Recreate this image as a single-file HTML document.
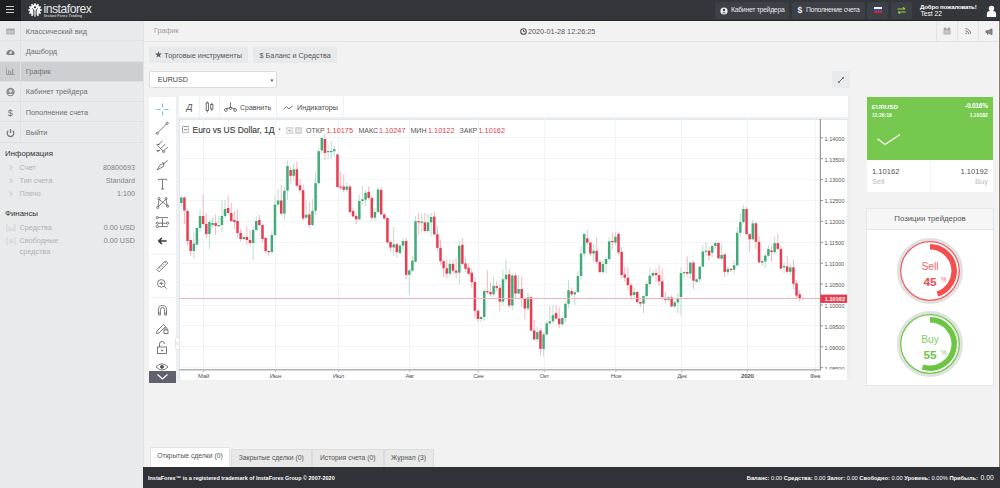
<!DOCTYPE html>
<html><head><meta charset="utf-8">
<style>
*{box-sizing:border-box;margin:0;padding:0}
html,body{width:1000px;height:488px;overflow:hidden;background:#f2f2f2;font-family:"Liberation Sans",sans-serif;}
.a{position:absolute}
.t{position:absolute;white-space:nowrap;line-height:1}
#hdr{left:0;top:0;width:1000px;height:21px;background:#33363b;border-bottom:1.2px solid #25282c}
#burger{left:0;top:0;width:20.8px;height:21px;background:#1d1f22;border-bottom:1.2px solid #141517}
#side{left:0;top:21px;width:144px;height:467px;background:#e9eaeb;border-right:1px solid #e2e3e4}
.mi{position:absolute;left:0;width:143px;height:20.25px;border-bottom:1px solid #dfe0e2}
.mi .ic{position:absolute;left:0;top:0;width:21px;height:19.25px;border-right:1px solid #dfe0e2}
.mi .tx{position:absolute;left:25.8px;top:6.5px;font-size:7.32px;color:#6c7075;line-height:1;white-space:nowrap}
#crumb{left:144px;top:21px;width:854px;height:21px;border-bottom:1px solid #e4e4e4}
#foot{left:143px;top:467px;width:857px;height:21px;background:#303237}
.btn{position:absolute;background:#e8e9eb}
#chart{left:148.5px;top:96.4px;width:701.5px;height:285px;background:#edf0f3}
#ltb{left:149px;top:96.5px;width:27px;height:274.6px;background:#fff}
#ttb{left:179px;top:96.4px;width:668.6px;height:20.4px;background:#fff}
#plot{left:179.2px;top:119.2px;width:667.8px;height:260.6px;background:#fff;border-left:0.8px solid #e2e6e9;border-top:0.8px solid #e2e6e9}
#grn{left:867px;top:97px;width:126px;height:63px;background:#77c84f}
#sb{left:867px;top:160px;width:126px;height:32px;background:#fff}
#pos{left:866px;top:208px;width:128px;height:178px;background:#fff;border:1px solid #e6e6e6}
.tab{position:absolute;top:449px;height:18px;background:#e8e8e8;border:1px solid #dcdcdc;border-bottom:none;font-size:6.8px;color:#555}
.tab span{position:absolute;top:4.6px;left:0;right:0;text-align:center;line-height:1;white-space:nowrap}
.hb{position:absolute;top:2px;height:17px;background:#3d4046;border-radius:2px}
.ticon{position:absolute;left:155px;width:15px;height:15px}
</style></head><body>
<div class="a" id="hdr"></div>
<div class="a" id="burger"></div>
<!-- burger lines -->
<div class="a" style="left:6.2px;top:6px;width:7.8px;height:1.4px;background:#ccc"></div>
<div class="a" style="left:6.2px;top:8.9px;width:7.8px;height:1.4px;background:#ccc"></div>
<div class="a" style="left:6.2px;top:11.7px;width:7.8px;height:1.4px;background:#ccc"></div>
<!-- logo -->
<svg class="a" style="left:28.2px;top:3.2px" width="14" height="14" viewBox="0 0 14 14">
<path fill="#f4f4f4" d="M5.93 1.81 L6.26 0.34 L7.74 0.34 L8.07 1.81 L8.66 1.97 L9.69 0.87 L10.97 1.60 L10.53 3.04 L10.96 3.47 L12.40 3.03 L13.13 4.31 L12.03 5.34 L12.19 5.93 L13.66 6.26 L13.66 7.74 L12.19 8.07 L12.03 8.66 L13.13 9.69 L12.40 10.97 L10.96 10.53 L10.53 10.96 L10.97 12.40 L9.69 13.13 L8.66 12.03 L8.07 12.19 L7.74 13.66 L6.26 13.66 L5.93 12.19 L5.34 12.03 L4.31 13.13 L3.03 12.40 L3.47 10.96 L3.04 10.53 L1.60 10.97 L0.87 9.69 L1.97 8.66 L1.81 8.07 L0.34 7.74 L0.34 6.26 L1.81 5.93 L1.97 5.34 L0.87 4.31 L1.60 3.03 L3.04 3.47 L3.47 3.04 L3.03 1.60 L4.31 0.87 L5.34 1.97 Z"/>
<circle cx="7" cy="4.2" r="1.05" fill="#2a2c30"/>
<path d="M4.4 5.6 Q5.9 6.4 5.9 8 V13.8 M9.6 5.6 Q8.1 6.4 8.1 8 V13.8" fill="none" stroke="#2a2c30" stroke-width="0.95"/>
</svg>
<div class="t" style="left:43.5px;top:3.2px;font-size:12.2px;letter-spacing:-0.5px;color:#e6e6e6">instaforex</div>
<div class="t" style="left:44px;top:14.5px;font-size:3.75px;color:#c4c4c4;font-weight:bold">Instant Forex Trading</div>
<!-- header buttons -->
<div class="hb" style="left:715px;width:74px"></div>
<svg class="a" style="left:719.5px;top:7px" width="8" height="8" viewBox="0 0 8 8"><circle cx="4" cy="4" r="3.6" fill="#eee"/><circle cx="4" cy="3" r="1.2" fill="#3d4046"/><path d="M2 6.3 Q4 4 6 6.3" fill="#3d4046"/></svg>
<div class="t" style="left:731px;top:7.3px;font-size:6.85px;letter-spacing:-0.28px;color:#e8e8e8">Кабинет трейдера</div>
<div class="hb" style="left:792px;width:73px"></div>
<div class="t" style="left:797.5px;top:6.2px;font-size:8.6px;color:#eee;font-weight:bold">$</div>
<div class="t" style="left:806px;top:7.3px;font-size:6.85px;letter-spacing:-0.3px;color:#e8e8e8">Пополнение счета</div>
<div class="hb" style="left:867px;width:21px"></div>
<div class="a" style="left:874px;top:7px;width:7.5px;height:2px;background:#f4f4f4"></div>
<div class="a" style="left:874px;top:9px;width:7.5px;height:2px;background:#2453b8"></div>
<div class="a" style="left:874px;top:11px;width:7.5px;height:2px;background:#e0202a"></div>
<div class="hb" style="left:891px;width:21px"></div>
<svg class="a" style="left:897px;top:7px" width="9" height="7" viewBox="0 0 9 7"><g stroke="#9bd53a" stroke-width="1.1" fill="none"><path d="M0.5 2 H8 M6 0.3 L8 2"/><path d="M8.5 5 H1 M3 6.7 L1 5"/></g></svg>
<div class="t" style="left:920px;top:4.3px;font-size:6.15px;letter-spacing:-0.2px;color:#fff;font-weight:bold">Добро пожаловать!</div>
<div class="t" style="left:920.5px;top:11.3px;font-size:6.67px;color:#fff">Test 22</div>
<svg class="a" style="left:986px;top:5px" width="11" height="13" viewBox="986 5 11 13"><circle cx="991.5" cy="8.5" r="2.7" fill="#fafafa"/><path d="M986.9 16.9 V14 Q986.9 10.9 990 10.9 H993 Q996.1 10.9 996.1 14 V16.9 Z" fill="#fafafa"/></svg>

<!-- sidebar -->
<div class="a" id="side"></div>
<div class="mi" style="top:21px"><div class="ic"></div><div class="tx">Классический вид</div></div>
<div class="mi" style="top:41.25px"><div class="ic"></div><div class="tx">Дашборд</div></div>
<div class="mi" style="top:61.5px;background:#cdd0d3"><div class="ic"></div><div class="tx">График</div></div>
<div class="mi" style="top:81.75px"><div class="ic"></div><div class="tx">Кабинет трейдера</div></div>
<div class="mi" style="top:102px"><div class="ic"></div><div class="tx">Пополнение счета</div></div>
<div class="mi" style="top:122.25px"><div class="ic"></div><div class="tx">Выйти</div></div>
<!-- sidebar icons -->
<svg class="a" style="left:0;top:21px" width="21" height="120">
<rect x="6.3" y="7.6" width="8.4" height="5.8" fill="#a3a6a9"/>
<rect x="7.1" y="9.3" width="6.8" height="3.3" fill="#c3c5c8"/>
<g transform="translate(10.5 31)"><path d="M-4.2 2 A4.2 4.2 0 1 1 4.2 2 L3 3 L-3 3 Z" fill="#7d8185"/><circle cx="0" cy="0.8" r="1.2" fill="#e9eaeb"/><path d="M0 0.8 L2.2 -2.2" stroke="#e9eaeb" stroke-width="0.8"/></g>
<g fill="#9a9ea2"><rect x="6" y="47" width="1" height="7"/><rect x="6" y="53" width="9" height="1"/><rect x="8" y="49" width="1.3" height="4"/><rect x="10" y="50" width="1.3" height="3"/><rect x="12" y="48" width="1.3" height="5"/></g>
<g transform="translate(10.5 71)"><circle r="4.2" fill="#8c9094"/><circle cx="0" cy="-1" r="1.5" fill="#e9eaeb"/><path d="M-2.6 3 Q0 0.3 2.6 3" fill="#e9eaeb"/></g>
<text x="10.3" y="94.5" font-size="9" fill="#6d7175" text-anchor="middle" font-family="Liberation Sans">$</text>
<g transform="translate(10.5 112)" fill="none" stroke="#777b7f" stroke-width="1.3"><path d="M-2.2 -2.2 A3.3 3.3 0 1 0 2.2 -2.2"/><path d="M0 -4 V0"/></g>
</svg>
<div class="t" style="left:5px;top:149.5px;font-size:7.84px;color:#333">Информация</div>
<div class="t" style="left:19.5px;top:163.7px;font-size:7.3px;color:#afb2b5">Счет</div>
<div class="t" style="left:19.5px;top:176.8px;font-size:7.3px;color:#afb2b5">Тип счета</div>
<div class="t" style="left:19.5px;top:189.5px;font-size:7.3px;color:#afb2b5">Плечо</div>
<div class="t" style="right:865px;top:163.7px;font-size:7.2px;color:#808387">80800693</div>
<div class="t" style="right:865px;top:176.8px;font-size:7.2px;color:#808387">Standard</div>
<div class="t" style="right:865px;top:189.5px;font-size:7.2px;color:#808387">1:100</div>
<svg class="a" style="left:0;top:160px" width="20" height="40" viewBox="0 160 20 40" fill="none" stroke="#cfd2d5" stroke-width="1.3"><path d="M9.6 165.6 L12.2 167.8 L9.6 170 M9.6 178.7 L12.2 180.9 L9.6 183.1 M9.6 191.5 L12.2 193.7 L9.6 195.9"/></svg>
<div class="t" style="left:5px;top:210px;font-size:7.86px;color:#333">Финансы</div>
<div class="t" style="left:19.5px;top:223.6px;font-size:7.3px;color:#afb2b5">Средства</div>
<div class="t" style="left:19.5px;top:236.7px;font-size:7.3px;color:#afb2b5">Свободные</div>
<div class="t" style="left:19.5px;top:247.8px;font-size:7.3px;color:#afb2b5">средства</div>
<div class="t" style="right:865px;top:223.6px;font-size:7.2px;color:#808387">0.00 USD</div>
<div class="t" style="right:865px;top:236.7px;font-size:7.2px;color:#808387">0.00 USD</div>
<svg class="a" style="left:5.5px;top:224px" width="10" height="21" viewBox="0 0 10 21" fill="none" stroke="#cdd0d3" stroke-width="0.8"><path d="M2 0.8 H0.8 V7.2 H2 M7.8 0.8 H9 V7.2 H7.8"/><path d="M3 3 V6 M5 4 V6 M7 2.5 V6 M2.5 6.2 H7.5"/><path d="M2 13.8 H0.8 V20.2 H2 M7.8 13.8 H9 V20.2 H7.8"/><path d="M3 15.8 H7 M3 17.2 H7 M3 18.6 H7"/></svg>

<!-- crumb bar -->
<div class="a" id="crumb"></div>
<div class="t" style="left:154px;top:27.3px;font-size:7.26px;color:#9a9a9a">График</div>
<svg class="a" style="left:519.5px;top:28px" width="7" height="7" viewBox="0 0 7 7"><circle cx="3.5" cy="3.5" r="2.8" fill="none" stroke="#555" stroke-width="1.1"/><path d="M3.5 1.8 V3.6 H5" fill="none" stroke="#555" stroke-width="0.9"/></svg>
<div class="t" style="left:528px;top:27.9px;font-size:7.26px;color:#555">2020-01-28 12:26:25</div>
<div class="a" style="left:936px;top:21px;width:1px;height:20px;background:#e2e2e2"></div>
<div class="a" style="left:957px;top:21px;width:1px;height:20px;background:#e2e2e2"></div>
<div class="a" style="left:978px;top:21px;width:1px;height:20px;background:#e2e2e2"></div>
<svg class="a" style="left:943px;top:27px" width="8" height="8" viewBox="0 0 8 8"><rect x="0.5" y="1.5" width="7" height="6" fill="#aaa"/><rect x="1.5" y="0.3" width="1" height="2" fill="#888"/><rect x="5.5" y="0.3" width="1" height="2" fill="#888"/><rect x="1.3" y="3.3" width="5.4" height="3.4" fill="#c8c8c8"/></svg>
<svg class="a" style="left:964.8px;top:28px" width="6.5" height="6.5" viewBox="0 0 8 8"><circle cx="1.3" cy="6.7" r="1" fill="#777"/><path d="M0.5 3.5 A4 4 0 0 1 4.5 7.5 M0.5 0.8 A6.7 6.7 0 0 1 7.2 7.5" fill="none" stroke="#777" stroke-width="1.2"/></svg>
<svg class="a" style="left:984.5px;top:28px" width="9" height="7.5" viewBox="0 0 10 8"><path d="M1 3 H3 L7.8 0.8 V7.2 L3 5 H1 Z" fill="#8a8a8a" stroke="#666" stroke-width="0.8" stroke-linejoin="round"/><path d="M2.6 5 L3.4 7.6" stroke="#666" stroke-width="1.1"/></svg>
<div class="a" style="left:998px;top:21px;width:1px;height:446px;background:#fafafa"></div><div class="a" style="left:999px;top:21px;width:1px;height:446px;background:#8c7a5c"></div>

<!-- buttons -->
<div class="btn" style="left:149.2px;top:46.9px;width:98.8px;height:16.3px"></div>
<svg class="a" style="left:155px;top:51.3px" width="7" height="7" viewBox="0 0 10 10"><path d="M5 0.3 L6.3 3.6 L9.8 3.7 L7 5.9 L8 9.4 L5 7.4 L2 9.4 L3 5.9 L0.2 3.7 L3.7 3.6 Z" fill="#575d63"/></svg>
<div class="t" style="left:164.3px;top:51.9px;font-size:7.26px;color:#555">Торговые инструменты</div>
<div class="btn" style="left:253.4px;top:46.9px;width:83.6px;height:16.3px"></div>
<div class="t" style="left:259.5px;top:51.9px;font-size:7.31px;color:#555">$ Баланс и Средства</div>
<div class="a" style="left:149.3px;top:71.2px;width:127.3px;height:17.3px;background:#fff;border:1px solid #dcdcdc;border-radius:2px"></div>
<div class="t" style="left:157.8px;top:77.3px;font-size:7.15px;color:#444">EURUSD</div>
<div class="t" style="left:269.8px;top:79px;font-size:4.3px;color:#333">▼</div>
<div class="a" style="left:831.5px;top:71px;width:18.5px;height:16.7px;background:#e9eaec"></div>
<svg class="a" style="left:836.6px;top:75.6px" width="8" height="8" viewBox="0 0 10 10"><path d="M2.5 7.5 L7.5 2.5" stroke="#5a5a5a" stroke-width="1.2"/><path d="M1.3 8.7 L1.7 6.2 L3.8 8.3 Z M8.7 1.3 L8.3 3.8 L6.2 1.7 Z" fill="#5a5a5a"/></svg>

<!-- chart container -->
<div class="a" id="chart"></div>
<div class="a" id="ltb"></div>
<div class="a" id="ttb"></div>
<div class="a" id="plot"></div>
<svg class="a" style="left:0;top:0" width="1000" height="488" shape-rendering="crispEdges">
<line x1="179" y1="137.8" x2="820.5" y2="137.8" stroke="#f2f5f8" stroke-width="1"/>
<line x1="179" y1="158.7" x2="820.5" y2="158.7" stroke="#f2f5f8" stroke-width="1"/>
<line x1="179" y1="179.6" x2="820.5" y2="179.6" stroke="#f2f5f8" stroke-width="1"/>
<line x1="179" y1="200.5" x2="820.5" y2="200.5" stroke="#f2f5f8" stroke-width="1"/>
<line x1="179" y1="221.4" x2="820.5" y2="221.4" stroke="#f2f5f8" stroke-width="1"/>
<line x1="179" y1="242.3" x2="820.5" y2="242.3" stroke="#f2f5f8" stroke-width="1"/>
<line x1="179" y1="263.2" x2="820.5" y2="263.2" stroke="#f2f5f8" stroke-width="1"/>
<line x1="179" y1="284.1" x2="820.5" y2="284.1" stroke="#f2f5f8" stroke-width="1"/>
<line x1="179" y1="305.0" x2="820.5" y2="305.0" stroke="#f2f5f8" stroke-width="1"/>
<line x1="179" y1="325.9" x2="820.5" y2="325.9" stroke="#f2f5f8" stroke-width="1"/>
<line x1="179" y1="346.8" x2="820.5" y2="346.8" stroke="#f2f5f8" stroke-width="1"/>
<line x1="179" y1="367.7" x2="820.5" y2="367.7" stroke="#f2f5f8" stroke-width="1"/>
<line x1="203.6" y1="119" x2="203.6" y2="370" stroke="#f0f3f7" stroke-width="1"/>
<line x1="275.4" y1="119" x2="275.4" y2="370" stroke="#f0f3f7" stroke-width="1"/>
<line x1="338.4" y1="119" x2="338.4" y2="370" stroke="#f0f3f7" stroke-width="1"/>
<line x1="409.7" y1="119" x2="409.7" y2="370" stroke="#f0f3f7" stroke-width="1"/>
<line x1="478.3" y1="119" x2="478.3" y2="370" stroke="#f0f3f7" stroke-width="1"/>
<line x1="544.3" y1="119" x2="544.3" y2="370" stroke="#f0f3f7" stroke-width="1"/>
<line x1="615.9" y1="119" x2="615.9" y2="370" stroke="#f0f3f7" stroke-width="1"/>
<line x1="681.9" y1="119" x2="681.9" y2="370" stroke="#f0f3f7" stroke-width="1"/>
<line x1="747.3" y1="119" x2="747.3" y2="370" stroke="#f0f3f7" stroke-width="1"/>
<line x1="815.8" y1="119" x2="815.8" y2="370" stroke="#f0f3f7" stroke-width="1"/>
</svg>
<svg class="a" style="left:0;top:0" width="1000" height="488"><defs><clipPath id="cb"><rect x="800" y="100" width="60" height="269.5"/></clipPath></defs>
<line x1="181.30" y1="195.7" x2="181.30" y2="206.3" stroke="#a9d8c0" stroke-width="0.8"/>
<line x1="184.42" y1="196.1" x2="184.42" y2="224.3" stroke="#f4a5b0" stroke-width="0.8"/>
<line x1="187.55" y1="208.9" x2="187.55" y2="245.7" stroke="#f4a5b0" stroke-width="0.8"/>
<line x1="190.67" y1="239.0" x2="190.67" y2="255.5" stroke="#f4a5b0" stroke-width="0.8"/>
<line x1="193.79" y1="232.5" x2="193.79" y2="258.8" stroke="#a9d8c0" stroke-width="0.8"/>
<line x1="196.92" y1="227.0" x2="196.92" y2="245.6" stroke="#a9d8c0" stroke-width="0.8"/>
<line x1="200.04" y1="209.6" x2="200.04" y2="231.7" stroke="#a9d8c0" stroke-width="0.8"/>
<line x1="203.16" y1="194.5" x2="203.16" y2="225.2" stroke="#f4a5b0" stroke-width="0.8"/>
<line x1="206.28" y1="213.2" x2="206.28" y2="238.6" stroke="#f4a5b0" stroke-width="0.8"/>
<line x1="209.41" y1="219.7" x2="209.41" y2="249.0" stroke="#a9d8c0" stroke-width="0.8"/>
<line x1="212.53" y1="217.8" x2="212.53" y2="227.6" stroke="#a9d8c0" stroke-width="0.8"/>
<line x1="215.65" y1="214.2" x2="215.65" y2="235.0" stroke="#f4a5b0" stroke-width="0.8"/>
<line x1="218.78" y1="216.0" x2="218.78" y2="227.1" stroke="#a9d8c0" stroke-width="0.8"/>
<line x1="221.90" y1="200.6" x2="221.90" y2="232.5" stroke="#a9d8c0" stroke-width="0.8"/>
<line x1="225.02" y1="199.8" x2="225.02" y2="218.4" stroke="#a9d8c0" stroke-width="0.8"/>
<line x1="228.15" y1="195.7" x2="228.15" y2="214.6" stroke="#f4a5b0" stroke-width="0.8"/>
<line x1="231.27" y1="203.0" x2="231.27" y2="222.0" stroke="#f4a5b0" stroke-width="0.8"/>
<line x1="234.39" y1="211.2" x2="234.39" y2="229.3" stroke="#f4a5b0" stroke-width="0.8"/>
<line x1="237.51" y1="209.6" x2="237.51" y2="237.5" stroke="#f4a5b0" stroke-width="0.8"/>
<line x1="240.64" y1="229.0" x2="240.64" y2="241.4" stroke="#f4a5b0" stroke-width="0.8"/>
<line x1="243.76" y1="235.2" x2="243.76" y2="240.4" stroke="#a9d8c0" stroke-width="0.8"/>
<line x1="246.88" y1="226.3" x2="246.88" y2="245.3" stroke="#f4a5b0" stroke-width="0.8"/>
<line x1="250.01" y1="230.0" x2="250.01" y2="245.3" stroke="#f4a5b0" stroke-width="0.8"/>
<line x1="253.13" y1="227.3" x2="253.13" y2="260.0" stroke="#a9d8c0" stroke-width="0.8"/>
<line x1="256.25" y1="216.5" x2="256.25" y2="231.3" stroke="#a9d8c0" stroke-width="0.8"/>
<line x1="259.38" y1="214.8" x2="259.38" y2="226.1" stroke="#f4a5b0" stroke-width="0.8"/>
<line x1="262.50" y1="223.3" x2="262.50" y2="242.3" stroke="#f4a5b0" stroke-width="0.8"/>
<line x1="265.62" y1="236.9" x2="265.62" y2="253.0" stroke="#f4a5b0" stroke-width="0.8"/>
<line x1="268.74" y1="250.0" x2="268.74" y2="256.3" stroke="#f4a5b0" stroke-width="0.8"/>
<line x1="271.87" y1="230.9" x2="271.87" y2="254.3" stroke="#a9d8c0" stroke-width="0.8"/>
<line x1="274.99" y1="195.7" x2="274.99" y2="236.4" stroke="#a9d8c0" stroke-width="0.8"/>
<line x1="278.11" y1="189.1" x2="278.11" y2="207.0" stroke="#a9d8c0" stroke-width="0.8"/>
<line x1="281.24" y1="185.0" x2="281.24" y2="215.4" stroke="#f4a5b0" stroke-width="0.8"/>
<line x1="284.36" y1="186.9" x2="284.36" y2="219.8" stroke="#a9d8c0" stroke-width="0.8"/>
<line x1="287.48" y1="160.3" x2="287.48" y2="199.8" stroke="#a9d8c0" stroke-width="0.8"/>
<line x1="290.61" y1="166.9" x2="290.61" y2="183.3" stroke="#f4a5b0" stroke-width="0.8"/>
<line x1="293.73" y1="163.6" x2="293.73" y2="180.7" stroke="#a9d8c0" stroke-width="0.8"/>
<line x1="296.85" y1="161.1" x2="296.85" y2="187.0" stroke="#f4a5b0" stroke-width="0.8"/>
<line x1="299.97" y1="179.2" x2="299.97" y2="193.0" stroke="#f4a5b0" stroke-width="0.8"/>
<line x1="303.10" y1="184.9" x2="303.10" y2="220.4" stroke="#f4a5b0" stroke-width="0.8"/>
<line x1="306.22" y1="200.5" x2="306.22" y2="218.8" stroke="#a9d8c0" stroke-width="0.8"/>
<line x1="309.34" y1="202.0" x2="309.34" y2="228.4" stroke="#f4a5b0" stroke-width="0.8"/>
<line x1="312.47" y1="199.0" x2="312.47" y2="226.2" stroke="#a9d8c0" stroke-width="0.8"/>
<line x1="315.59" y1="172.3" x2="315.59" y2="214.8" stroke="#a9d8c0" stroke-width="0.8"/>
<line x1="318.71" y1="148.0" x2="318.71" y2="185.0" stroke="#a9d8c0" stroke-width="0.8"/>
<line x1="321.84" y1="136.6" x2="321.84" y2="154.5" stroke="#a9d8c0" stroke-width="0.8"/>
<line x1="324.96" y1="133.3" x2="324.96" y2="160.3" stroke="#f4a5b0" stroke-width="0.8"/>
<line x1="328.08" y1="144.8" x2="328.08" y2="159.2" stroke="#a9d8c0" stroke-width="0.8"/>
<line x1="331.20" y1="141.5" x2="331.20" y2="158.7" stroke="#a9d8c0" stroke-width="0.8"/>
<line x1="334.33" y1="145.6" x2="334.33" y2="157.0" stroke="#a9d8c0" stroke-width="0.8"/>
<line x1="337.45" y1="153.4" x2="337.45" y2="188.2" stroke="#f4a5b0" stroke-width="0.8"/>
<line x1="340.57" y1="171.8" x2="340.57" y2="189.8" stroke="#f4a5b0" stroke-width="0.8"/>
<line x1="343.70" y1="174.3" x2="343.70" y2="192.3" stroke="#f4a5b0" stroke-width="0.8"/>
<line x1="346.82" y1="181.9" x2="346.82" y2="191.5" stroke="#a9d8c0" stroke-width="0.8"/>
<line x1="349.94" y1="185.1" x2="349.94" y2="214.3" stroke="#f4a5b0" stroke-width="0.8"/>
<line x1="353.07" y1="207.8" x2="353.07" y2="217.3" stroke="#f4a5b0" stroke-width="0.8"/>
<line x1="356.19" y1="213.9" x2="356.19" y2="224.2" stroke="#f4a5b0" stroke-width="0.8"/>
<line x1="359.31" y1="195.0" x2="359.31" y2="220.3" stroke="#a9d8c0" stroke-width="0.8"/>
<line x1="362.43" y1="185.7" x2="362.43" y2="205.3" stroke="#a9d8c0" stroke-width="0.8"/>
<line x1="365.56" y1="190.0" x2="365.56" y2="206.1" stroke="#a9d8c0" stroke-width="0.8"/>
<line x1="368.68" y1="186.5" x2="368.68" y2="199.6" stroke="#f4a5b0" stroke-width="0.8"/>
<line x1="371.80" y1="196.0" x2="371.80" y2="220.3" stroke="#f4a5b0" stroke-width="0.8"/>
<line x1="374.93" y1="207.8" x2="374.93" y2="220.9" stroke="#a9d8c0" stroke-width="0.8"/>
<line x1="378.05" y1="187.3" x2="378.05" y2="213.1" stroke="#a9d8c0" stroke-width="0.8"/>
<line x1="381.17" y1="187.3" x2="381.17" y2="215.4" stroke="#f4a5b0" stroke-width="0.8"/>
<line x1="384.30" y1="213.4" x2="384.30" y2="219.6" stroke="#f4a5b0" stroke-width="0.8"/>
<line x1="387.42" y1="217.0" x2="387.42" y2="243.8" stroke="#f4a5b0" stroke-width="0.8"/>
<line x1="390.54" y1="241.0" x2="390.54" y2="252.0" stroke="#f4a5b0" stroke-width="0.8"/>
<line x1="393.66" y1="227.1" x2="393.66" y2="256.0" stroke="#a9d8c0" stroke-width="0.8"/>
<line x1="396.79" y1="243.0" x2="396.79" y2="257.5" stroke="#f4a5b0" stroke-width="0.8"/>
<line x1="399.91" y1="244.1" x2="399.91" y2="254.1" stroke="#a9d8c0" stroke-width="0.8"/>
<line x1="403.03" y1="238.2" x2="403.03" y2="250.5" stroke="#a9d8c0" stroke-width="0.8"/>
<line x1="406.16" y1="237.9" x2="406.16" y2="279.7" stroke="#f4a5b0" stroke-width="0.8"/>
<line x1="409.28" y1="269.4" x2="409.28" y2="295.0" stroke="#a9d8c0" stroke-width="0.8"/>
<line x1="412.40" y1="255.9" x2="412.40" y2="272.0" stroke="#a9d8c0" stroke-width="0.8"/>
<line x1="415.53" y1="216.2" x2="415.53" y2="262.8" stroke="#a9d8c0" stroke-width="0.8"/>
<line x1="418.65" y1="213.0" x2="418.65" y2="234.6" stroke="#f4a5b0" stroke-width="0.8"/>
<line x1="421.77" y1="213.0" x2="421.77" y2="233.0" stroke="#a9d8c0" stroke-width="0.8"/>
<line x1="424.89" y1="213.0" x2="424.89" y2="231.6" stroke="#f4a5b0" stroke-width="0.8"/>
<line x1="428.02" y1="214.0" x2="428.02" y2="233.0" stroke="#a9d8c0" stroke-width="0.8"/>
<line x1="431.14" y1="213.0" x2="431.14" y2="236.2" stroke="#a9d8c0" stroke-width="0.8"/>
<line x1="434.26" y1="212.0" x2="434.26" y2="235.8" stroke="#f4a5b0" stroke-width="0.8"/>
<line x1="437.39" y1="225.6" x2="437.39" y2="251.2" stroke="#f4a5b0" stroke-width="0.8"/>
<line x1="440.51" y1="239.5" x2="440.51" y2="264.6" stroke="#f4a5b0" stroke-width="0.8"/>
<line x1="443.63" y1="259.8" x2="443.63" y2="277.2" stroke="#f4a5b0" stroke-width="0.8"/>
<line x1="446.76" y1="259.2" x2="446.76" y2="278.6" stroke="#f4a5b0" stroke-width="0.8"/>
<line x1="449.88" y1="260.0" x2="449.88" y2="277.2" stroke="#a9d8c0" stroke-width="0.8"/>
<line x1="453.00" y1="260.2" x2="453.00" y2="273.9" stroke="#f4a5b0" stroke-width="0.8"/>
<line x1="456.12" y1="258.0" x2="456.12" y2="278.5" stroke="#f4a5b0" stroke-width="0.8"/>
<line x1="459.25" y1="240.8" x2="459.25" y2="284.3" stroke="#a9d8c0" stroke-width="0.8"/>
<line x1="462.37" y1="238.0" x2="462.37" y2="265.2" stroke="#f4a5b0" stroke-width="0.8"/>
<line x1="465.49" y1="257.2" x2="465.49" y2="271.7" stroke="#f4a5b0" stroke-width="0.8"/>
<line x1="468.62" y1="263.1" x2="468.62" y2="275.5" stroke="#f4a5b0" stroke-width="0.8"/>
<line x1="471.74" y1="268.2" x2="471.74" y2="287.5" stroke="#f4a5b0" stroke-width="0.8"/>
<line x1="474.86" y1="277.4" x2="474.86" y2="318.7" stroke="#f4a5b0" stroke-width="0.8"/>
<line x1="477.99" y1="309.5" x2="477.99" y2="322.0" stroke="#f4a5b0" stroke-width="0.8"/>
<line x1="481.11" y1="315.8" x2="481.11" y2="322.0" stroke="#a9d8c0" stroke-width="0.8"/>
<line x1="484.23" y1="288.4" x2="484.23" y2="321.2" stroke="#a9d8c0" stroke-width="0.8"/>
<line x1="487.35" y1="270.3" x2="487.35" y2="294.1" stroke="#f4a5b0" stroke-width="0.8"/>
<line x1="490.48" y1="282.3" x2="490.48" y2="296.6" stroke="#f4a5b0" stroke-width="0.8"/>
<line x1="493.60" y1="277.4" x2="493.60" y2="297.0" stroke="#a9d8c0" stroke-width="0.8"/>
<line x1="496.72" y1="281.0" x2="496.72" y2="291.2" stroke="#f4a5b0" stroke-width="0.8"/>
<line x1="499.85" y1="284.5" x2="499.85" y2="311.3" stroke="#f4a5b0" stroke-width="0.8"/>
<line x1="502.97" y1="269.5" x2="502.97" y2="305.0" stroke="#a9d8c0" stroke-width="0.8"/>
<line x1="506.09" y1="259.7" x2="506.09" y2="282.9" stroke="#a9d8c0" stroke-width="0.8"/>
<line x1="509.22" y1="269.1" x2="509.22" y2="308.0" stroke="#f4a5b0" stroke-width="0.8"/>
<line x1="512.34" y1="273.9" x2="512.34" y2="310.0" stroke="#a9d8c0" stroke-width="0.8"/>
<line x1="515.46" y1="272.4" x2="515.46" y2="299.4" stroke="#f4a5b0" stroke-width="0.8"/>
<line x1="518.58" y1="274.8" x2="518.58" y2="294.6" stroke="#a9d8c0" stroke-width="0.8"/>
<line x1="521.71" y1="276.8" x2="521.71" y2="306.8" stroke="#f4a5b0" stroke-width="0.8"/>
<line x1="524.83" y1="297.3" x2="524.83" y2="319.1" stroke="#f4a5b0" stroke-width="0.8"/>
<line x1="527.95" y1="292.5" x2="527.95" y2="311.2" stroke="#a9d8c0" stroke-width="0.8"/>
<line x1="531.08" y1="295.8" x2="531.08" y2="331.0" stroke="#f4a5b0" stroke-width="0.8"/>
<line x1="534.20" y1="320.0" x2="534.20" y2="340.4" stroke="#f4a5b0" stroke-width="0.8"/>
<line x1="537.32" y1="327.0" x2="537.32" y2="342.0" stroke="#a9d8c0" stroke-width="0.8"/>
<line x1="540.45" y1="328.4" x2="540.45" y2="355.0" stroke="#f4a5b0" stroke-width="0.8"/>
<line x1="543.57" y1="332.6" x2="543.57" y2="356.0" stroke="#a9d8c0" stroke-width="0.8"/>
<line x1="546.69" y1="320.4" x2="546.69" y2="335.6" stroke="#a9d8c0" stroke-width="0.8"/>
<line x1="549.81" y1="306.0" x2="549.81" y2="324.7" stroke="#a9d8c0" stroke-width="0.8"/>
<line x1="552.94" y1="305.2" x2="552.94" y2="323.7" stroke="#a9d8c0" stroke-width="0.8"/>
<line x1="556.06" y1="305.2" x2="556.06" y2="320.2" stroke="#f4a5b0" stroke-width="0.8"/>
<line x1="559.18" y1="307.3" x2="559.18" y2="328.1" stroke="#f4a5b0" stroke-width="0.8"/>
<line x1="562.31" y1="316.5" x2="562.31" y2="325.3" stroke="#a9d8c0" stroke-width="0.8"/>
<line x1="565.43" y1="301.4" x2="565.43" y2="322.3" stroke="#a9d8c0" stroke-width="0.8"/>
<line x1="568.55" y1="280.0" x2="568.55" y2="308.2" stroke="#a9d8c0" stroke-width="0.8"/>
<line x1="571.67" y1="287.3" x2="571.67" y2="296.5" stroke="#f4a5b0" stroke-width="0.8"/>
<line x1="574.80" y1="290.2" x2="574.80" y2="305.0" stroke="#a9d8c0" stroke-width="0.8"/>
<line x1="577.92" y1="270.9" x2="577.92" y2="293.1" stroke="#a9d8c0" stroke-width="0.8"/>
<line x1="581.04" y1="246.3" x2="581.04" y2="279.6" stroke="#a9d8c0" stroke-width="0.8"/>
<line x1="584.17" y1="232.9" x2="584.17" y2="257.0" stroke="#a9d8c0" stroke-width="0.8"/>
<line x1="587.29" y1="230.2" x2="587.29" y2="244.8" stroke="#f4a5b0" stroke-width="0.8"/>
<line x1="590.41" y1="241.2" x2="590.41" y2="255.7" stroke="#f4a5b0" stroke-width="0.8"/>
<line x1="593.54" y1="244.3" x2="593.54" y2="261.4" stroke="#a9d8c0" stroke-width="0.8"/>
<line x1="596.66" y1="237.3" x2="596.66" y2="264.1" stroke="#f4a5b0" stroke-width="0.8"/>
<line x1="599.78" y1="260.6" x2="599.78" y2="273.4" stroke="#f4a5b0" stroke-width="0.8"/>
<line x1="602.90" y1="260.6" x2="602.90" y2="274.2" stroke="#a9d8c0" stroke-width="0.8"/>
<line x1="606.03" y1="257.0" x2="606.03" y2="273.4" stroke="#a9d8c0" stroke-width="0.8"/>
<line x1="609.15" y1="237.0" x2="609.15" y2="260.8" stroke="#a9d8c0" stroke-width="0.8"/>
<line x1="612.27" y1="232.4" x2="612.27" y2="249.6" stroke="#f4a5b0" stroke-width="0.8"/>
<line x1="615.40" y1="232.4" x2="615.40" y2="245.5" stroke="#a9d8c0" stroke-width="0.8"/>
<line x1="618.52" y1="232.4" x2="618.52" y2="254.6" stroke="#f4a5b0" stroke-width="0.8"/>
<line x1="621.64" y1="247.2" x2="621.64" y2="278.4" stroke="#f4a5b0" stroke-width="0.8"/>
<line x1="624.77" y1="266.9" x2="624.77" y2="281.8" stroke="#f4a5b0" stroke-width="0.8"/>
<line x1="627.89" y1="267.4" x2="627.89" y2="289.8" stroke="#f4a5b0" stroke-width="0.8"/>
<line x1="631.01" y1="282.9" x2="631.01" y2="300.1" stroke="#f4a5b0" stroke-width="0.8"/>
<line x1="634.13" y1="287.4" x2="634.13" y2="297.5" stroke="#a9d8c0" stroke-width="0.8"/>
<line x1="637.26" y1="290.9" x2="637.26" y2="303.8" stroke="#f4a5b0" stroke-width="0.8"/>
<line x1="640.38" y1="301.0" x2="640.38" y2="307.0" stroke="#f4a5b0" stroke-width="0.8"/>
<line x1="643.50" y1="295.0" x2="643.50" y2="313.0" stroke="#a9d8c0" stroke-width="0.8"/>
<line x1="646.63" y1="281.6" x2="646.63" y2="300.2" stroke="#a9d8c0" stroke-width="0.8"/>
<line x1="649.75" y1="267.7" x2="649.75" y2="287.1" stroke="#a9d8c0" stroke-width="0.8"/>
<line x1="652.87" y1="270.3" x2="652.87" y2="276.8" stroke="#a9d8c0" stroke-width="0.8"/>
<line x1="656.00" y1="268.9" x2="656.00" y2="282.1" stroke="#f4a5b0" stroke-width="0.8"/>
<line x1="659.12" y1="264.8" x2="659.12" y2="285.9" stroke="#f4a5b0" stroke-width="0.8"/>
<line x1="662.24" y1="268.5" x2="662.24" y2="298.9" stroke="#f4a5b0" stroke-width="0.8"/>
<line x1="665.37" y1="292.3" x2="665.37" y2="303.4" stroke="#f4a5b0" stroke-width="0.8"/>
<line x1="668.49" y1="296.3" x2="668.49" y2="301.5" stroke="#a9d8c0" stroke-width="0.8"/>
<line x1="671.61" y1="295.3" x2="671.61" y2="307.0" stroke="#f4a5b0" stroke-width="0.8"/>
<line x1="674.73" y1="301.1" x2="674.73" y2="308.5" stroke="#a9d8c0" stroke-width="0.8"/>
<line x1="677.86" y1="293.3" x2="677.86" y2="313.0" stroke="#a9d8c0" stroke-width="0.8"/>
<line x1="680.98" y1="267.5" x2="680.98" y2="315.4" stroke="#a9d8c0" stroke-width="0.8"/>
<line x1="684.10" y1="271.0" x2="684.10" y2="277.7" stroke="#a9d8c0" stroke-width="0.8"/>
<line x1="687.23" y1="256.4" x2="687.23" y2="275.6" stroke="#f4a5b0" stroke-width="0.8"/>
<line x1="690.35" y1="261.6" x2="690.35" y2="278.5" stroke="#a9d8c0" stroke-width="0.8"/>
<line x1="693.47" y1="260.5" x2="693.47" y2="288.9" stroke="#f4a5b0" stroke-width="0.8"/>
<line x1="696.60" y1="278.3" x2="696.60" y2="283.1" stroke="#a9d8c0" stroke-width="0.8"/>
<line x1="699.72" y1="265.6" x2="699.72" y2="282.7" stroke="#a9d8c0" stroke-width="0.8"/>
<line x1="702.84" y1="245.2" x2="702.84" y2="267.7" stroke="#a9d8c0" stroke-width="0.8"/>
<line x1="705.96" y1="241.6" x2="705.96" y2="255.8" stroke="#a9d8c0" stroke-width="0.8"/>
<line x1="709.09" y1="247.0" x2="709.09" y2="260.5" stroke="#f4a5b0" stroke-width="0.8"/>
<line x1="712.21" y1="244.9" x2="712.21" y2="257.2" stroke="#a9d8c0" stroke-width="0.8"/>
<line x1="715.33" y1="240.7" x2="715.33" y2="249.0" stroke="#a9d8c0" stroke-width="0.8"/>
<line x1="718.46" y1="242.0" x2="718.46" y2="259.2" stroke="#f4a5b0" stroke-width="0.8"/>
<line x1="721.58" y1="245.0" x2="721.58" y2="260.4" stroke="#a9d8c0" stroke-width="0.8"/>
<line x1="724.70" y1="253.4" x2="724.70" y2="276.9" stroke="#f4a5b0" stroke-width="0.8"/>
<line x1="727.83" y1="266.3" x2="727.83" y2="275.2" stroke="#a9d8c0" stroke-width="0.8"/>
<line x1="730.95" y1="267.9" x2="730.95" y2="272.0" stroke="#f4a5b0" stroke-width="0.8"/>
<line x1="734.07" y1="260.6" x2="734.07" y2="273.7" stroke="#a9d8c0" stroke-width="0.8"/>
<line x1="737.19" y1="227.0" x2="737.19" y2="266.7" stroke="#a9d8c0" stroke-width="0.8"/>
<line x1="740.32" y1="213.4" x2="740.32" y2="237.2" stroke="#a9d8c0" stroke-width="0.8"/>
<line x1="743.44" y1="205.2" x2="743.44" y2="223.2" stroke="#a9d8c0" stroke-width="0.8"/>
<line x1="746.56" y1="206.9" x2="746.56" y2="235.3" stroke="#f4a5b0" stroke-width="0.8"/>
<line x1="749.69" y1="233.1" x2="749.69" y2="252.4" stroke="#f4a5b0" stroke-width="0.8"/>
<line x1="752.81" y1="219.6" x2="752.81" y2="240.5" stroke="#a9d8c0" stroke-width="0.8"/>
<line x1="755.93" y1="221.9" x2="755.93" y2="249.0" stroke="#f4a5b0" stroke-width="0.8"/>
<line x1="759.06" y1="236.0" x2="759.06" y2="263.6" stroke="#f4a5b0" stroke-width="0.8"/>
<line x1="762.18" y1="259.0" x2="762.18" y2="266.3" stroke="#a9d8c0" stroke-width="0.8"/>
<line x1="765.30" y1="253.7" x2="765.30" y2="268.0" stroke="#a9d8c0" stroke-width="0.8"/>
<line x1="768.42" y1="245.0" x2="768.42" y2="256.7" stroke="#a9d8c0" stroke-width="0.8"/>
<line x1="771.55" y1="245.7" x2="771.55" y2="261.5" stroke="#f4a5b0" stroke-width="0.8"/>
<line x1="774.67" y1="236.8" x2="774.67" y2="254.3" stroke="#a9d8c0" stroke-width="0.8"/>
<line x1="777.79" y1="233.5" x2="777.79" y2="249.9" stroke="#f4a5b0" stroke-width="0.8"/>
<line x1="780.92" y1="245.8" x2="780.92" y2="270.2" stroke="#f4a5b0" stroke-width="0.8"/>
<line x1="784.04" y1="262.2" x2="784.04" y2="273.3" stroke="#a9d8c0" stroke-width="0.8"/>
<line x1="787.16" y1="256.0" x2="787.16" y2="273.8" stroke="#f4a5b0" stroke-width="0.8"/>
<line x1="790.29" y1="264.5" x2="790.29" y2="275.6" stroke="#a9d8c0" stroke-width="0.8"/>
<line x1="793.41" y1="260.0" x2="793.41" y2="289.5" stroke="#f4a5b0" stroke-width="0.8"/>
<line x1="796.53" y1="280.2" x2="796.53" y2="298.2" stroke="#f4a5b0" stroke-width="0.8"/>
<line x1="799.65" y1="290.2" x2="799.65" y2="301.4" stroke="#f4a5b0" stroke-width="0.8"/>
<line x1="802.78" y1="297.0" x2="802.78" y2="299.6" stroke="#f4a5b0" stroke-width="0.8"/>
<rect x="180.05" y="197.5" width="2.5" height="5.5" fill="#43ab79"/>
<rect x="183.17" y="197.5" width="2.5" height="13.0" fill="#e93d52"/>
<rect x="186.30" y="211.0" width="2.5" height="30.0" fill="#e93d52"/>
<rect x="189.42" y="240.0" width="2.5" height="11.0" fill="#e93d52"/>
<rect x="192.54" y="243.6" width="2.5" height="7.4" fill="#43ab79"/>
<rect x="195.67" y="228.0" width="2.5" height="16.6" fill="#43ab79"/>
<rect x="198.79" y="216.0" width="2.5" height="12.0" fill="#43ab79"/>
<rect x="201.91" y="216.0" width="2.5" height="8.0" fill="#e93d52"/>
<rect x="205.03" y="224.0" width="2.5" height="10.0" fill="#e93d52"/>
<rect x="208.16" y="222.0" width="2.5" height="12.0" fill="#43ab79"/>
<rect x="211.28" y="223.0" width="2.5" height="2.0" fill="#43ab79"/>
<rect x="214.40" y="223.0" width="2.5" height="3.0" fill="#e93d52"/>
<rect x="217.53" y="225.0" width="2.5" height="1.2" fill="#43ab79"/>
<rect x="220.65" y="216.0" width="2.5" height="9.0" fill="#43ab79"/>
<rect x="223.77" y="209.0" width="2.5" height="7.0" fill="#43ab79"/>
<rect x="226.90" y="208.0" width="2.5" height="5.0" fill="#e93d52"/>
<rect x="230.02" y="213.0" width="2.5" height="8.0" fill="#e93d52"/>
<rect x="233.14" y="220.0" width="2.5" height="2.0" fill="#e93d52"/>
<rect x="236.26" y="221.0" width="2.5" height="12.0" fill="#e93d52"/>
<rect x="239.39" y="233.0" width="2.5" height="6.0" fill="#e93d52"/>
<rect x="242.51" y="237.0" width="2.5" height="2.0" fill="#43ab79"/>
<rect x="245.63" y="237.0" width="2.5" height="3.0" fill="#e93d52"/>
<rect x="248.76" y="240.0" width="2.5" height="3.0" fill="#e93d52"/>
<rect x="251.88" y="230.0" width="2.5" height="13.0" fill="#43ab79"/>
<rect x="255.00" y="221.0" width="2.5" height="9.0" fill="#43ab79"/>
<rect x="258.12" y="220.0" width="2.5" height="5.0" fill="#e93d52"/>
<rect x="261.25" y="225.0" width="2.5" height="14.0" fill="#e93d52"/>
<rect x="264.37" y="238.0" width="2.5" height="13.0" fill="#e93d52"/>
<rect x="267.49" y="251.0" width="2.5" height="1.2" fill="#e93d52"/>
<rect x="270.62" y="235.0" width="2.5" height="17.0" fill="#43ab79"/>
<rect x="273.74" y="204.6" width="2.5" height="30.4" fill="#43ab79"/>
<rect x="276.86" y="200.5" width="2.5" height="4.1" fill="#43ab79"/>
<rect x="279.99" y="200.5" width="2.5" height="13.1" fill="#e93d52"/>
<rect x="283.11" y="190.7" width="2.5" height="22.9" fill="#43ab79"/>
<rect x="286.23" y="166.0" width="2.5" height="24.6" fill="#43ab79"/>
<rect x="289.36" y="170.0" width="2.5" height="5.8" fill="#e93d52"/>
<rect x="292.48" y="169.3" width="2.5" height="6.5" fill="#43ab79"/>
<rect x="295.60" y="169.3" width="2.5" height="16.4" fill="#e93d52"/>
<rect x="298.72" y="185.3" width="2.5" height="4.9" fill="#e93d52"/>
<rect x="301.85" y="190.2" width="2.5" height="28.3" fill="#e93d52"/>
<rect x="304.97" y="214.8" width="2.5" height="2.9" fill="#43ab79"/>
<rect x="308.09" y="214.4" width="2.5" height="10.6" fill="#e93d52"/>
<rect x="311.22" y="210.8" width="2.5" height="14.2" fill="#43ab79"/>
<rect x="314.34" y="183.2" width="2.5" height="27.6" fill="#43ab79"/>
<rect x="317.46" y="151.2" width="2.5" height="32.0" fill="#43ab79"/>
<rect x="320.59" y="138.0" width="2.5" height="12.4" fill="#43ab79"/>
<rect x="323.71" y="139.0" width="2.5" height="13.9" fill="#e93d52"/>
<rect x="326.83" y="151.0" width="2.5" height="1.2" fill="#43ab79"/>
<rect x="329.95" y="151.0" width="2.5" height="1.2" fill="#43ab79"/>
<rect x="333.08" y="149.3" width="2.5" height="1.9" fill="#43ab79"/>
<rect x="336.20" y="154.5" width="2.5" height="32.5" fill="#e93d52"/>
<rect x="339.32" y="186.5" width="2.5" height="1.2" fill="#e93d52"/>
<rect x="342.45" y="186.5" width="2.5" height="3.3" fill="#e93d52"/>
<rect x="345.57" y="186.5" width="2.5" height="3.3" fill="#43ab79"/>
<rect x="348.69" y="186.6" width="2.5" height="25.4" fill="#e93d52"/>
<rect x="351.82" y="211.0" width="2.5" height="5.4" fill="#e93d52"/>
<rect x="354.94" y="216.0" width="2.5" height="3.3" fill="#e93d52"/>
<rect x="358.06" y="201.0" width="2.5" height="18.3" fill="#43ab79"/>
<rect x="361.18" y="199.3" width="2.5" height="1.7" fill="#43ab79"/>
<rect x="364.31" y="192.8" width="2.5" height="6.9" fill="#43ab79"/>
<rect x="367.43" y="191.8" width="2.5" height="6.2" fill="#e93d52"/>
<rect x="370.55" y="198.0" width="2.5" height="19.7" fill="#e93d52"/>
<rect x="373.68" y="212.0" width="2.5" height="5.7" fill="#43ab79"/>
<rect x="376.80" y="189.5" width="2.5" height="22.5" fill="#43ab79"/>
<rect x="379.92" y="189.8" width="2.5" height="24.6" fill="#e93d52"/>
<rect x="383.05" y="214.4" width="2.5" height="4.1" fill="#e93d52"/>
<rect x="386.17" y="218.0" width="2.5" height="24.3" fill="#e93d52"/>
<rect x="389.29" y="242.0" width="2.5" height="5.5" fill="#e93d52"/>
<rect x="392.41" y="244.3" width="2.5" height="3.2" fill="#43ab79"/>
<rect x="395.54" y="244.3" width="2.5" height="7.7" fill="#e93d52"/>
<rect x="398.66" y="245.6" width="2.5" height="7.4" fill="#43ab79"/>
<rect x="401.78" y="241.0" width="2.5" height="4.6" fill="#43ab79"/>
<rect x="404.91" y="241.0" width="2.5" height="33.8" fill="#e93d52"/>
<rect x="408.03" y="270.4" width="2.5" height="4.4" fill="#43ab79"/>
<rect x="411.15" y="260.6" width="2.5" height="10.1" fill="#43ab79"/>
<rect x="414.28" y="221.2" width="2.5" height="40.5" fill="#43ab79"/>
<rect x="417.40" y="221.2" width="2.5" height="1.2" fill="#e93d52"/>
<rect x="420.52" y="221.5" width="2.5" height="1.3" fill="#43ab79"/>
<rect x="423.64" y="222.4" width="2.5" height="8.6" fill="#e93d52"/>
<rect x="426.77" y="222.4" width="2.5" height="8.6" fill="#43ab79"/>
<rect x="429.89" y="217.0" width="2.5" height="5.4" fill="#43ab79"/>
<rect x="433.01" y="216.6" width="2.5" height="17.7" fill="#e93d52"/>
<rect x="436.14" y="234.3" width="2.5" height="13.5" fill="#e93d52"/>
<rect x="439.26" y="247.8" width="2.5" height="13.4" fill="#e93d52"/>
<rect x="442.38" y="261.2" width="2.5" height="7.1" fill="#e93d52"/>
<rect x="445.51" y="268.3" width="2.5" height="5.4" fill="#e93d52"/>
<rect x="448.63" y="263.9" width="2.5" height="9.8" fill="#43ab79"/>
<rect x="451.75" y="263.9" width="2.5" height="6.8" fill="#e93d52"/>
<rect x="454.87" y="270.7" width="2.5" height="2.0" fill="#e93d52"/>
<rect x="458.00" y="245.8" width="2.5" height="26.9" fill="#43ab79"/>
<rect x="461.12" y="244.8" width="2.5" height="19.1" fill="#e93d52"/>
<rect x="464.24" y="263.4" width="2.5" height="5.4" fill="#e93d52"/>
<rect x="467.37" y="267.8" width="2.5" height="5.9" fill="#e93d52"/>
<rect x="470.49" y="272.7" width="2.5" height="9.5" fill="#e93d52"/>
<rect x="473.61" y="282.0" width="2.5" height="28.7" fill="#e93d52"/>
<rect x="476.74" y="310.7" width="2.5" height="8.3" fill="#e93d52"/>
<rect x="479.86" y="317.0" width="2.5" height="2.0" fill="#43ab79"/>
<rect x="482.98" y="291.0" width="2.5" height="26.0" fill="#43ab79"/>
<rect x="486.10" y="291.0" width="2.5" height="1.2" fill="#e93d52"/>
<rect x="489.23" y="292.0" width="2.5" height="2.3" fill="#e93d52"/>
<rect x="492.35" y="285.8" width="2.5" height="8.5" fill="#43ab79"/>
<rect x="495.47" y="286.0" width="2.5" height="1.8" fill="#e93d52"/>
<rect x="498.60" y="287.8" width="2.5" height="13.9" fill="#e93d52"/>
<rect x="501.72" y="279.3" width="2.5" height="22.4" fill="#43ab79"/>
<rect x="504.84" y="274.7" width="2.5" height="4.6" fill="#43ab79"/>
<rect x="507.97" y="274.3" width="2.5" height="31.2" fill="#e93d52"/>
<rect x="511.09" y="275.5" width="2.5" height="30.0" fill="#43ab79"/>
<rect x="514.21" y="275.5" width="2.5" height="18.0" fill="#e93d52"/>
<rect x="517.33" y="289.0" width="2.5" height="4.5" fill="#43ab79"/>
<rect x="520.46" y="289.0" width="2.5" height="9.4" fill="#e93d52"/>
<rect x="523.58" y="298.4" width="2.5" height="10.1" fill="#e93d52"/>
<rect x="526.70" y="297.3" width="2.5" height="11.2" fill="#43ab79"/>
<rect x="529.83" y="297.3" width="2.5" height="33.2" fill="#e93d52"/>
<rect x="532.95" y="330.5" width="2.5" height="8.8" fill="#e93d52"/>
<rect x="536.07" y="332.0" width="2.5" height="7.3" fill="#43ab79"/>
<rect x="539.20" y="330.5" width="2.5" height="18.4" fill="#e93d52"/>
<rect x="542.32" y="334.4" width="2.5" height="14.5" fill="#43ab79"/>
<rect x="545.44" y="323.4" width="2.5" height="11.0" fill="#43ab79"/>
<rect x="548.56" y="321.3" width="2.5" height="2.1" fill="#43ab79"/>
<rect x="551.69" y="315.2" width="2.5" height="6.1" fill="#43ab79"/>
<rect x="554.81" y="313.0" width="2.5" height="5.5" fill="#e93d52"/>
<rect x="557.93" y="318.5" width="2.5" height="5.8" fill="#e93d52"/>
<rect x="561.06" y="318.0" width="2.5" height="6.3" fill="#43ab79"/>
<rect x="564.18" y="303.8" width="2.5" height="14.2" fill="#43ab79"/>
<rect x="567.30" y="290.2" width="2.5" height="13.6" fill="#43ab79"/>
<rect x="570.42" y="291.1" width="2.5" height="3.3" fill="#e93d52"/>
<rect x="573.55" y="292.3" width="2.5" height="2.1" fill="#43ab79"/>
<rect x="576.67" y="276.0" width="2.5" height="16.0" fill="#43ab79"/>
<rect x="579.79" y="253.6" width="2.5" height="22.4" fill="#43ab79"/>
<rect x="582.92" y="234.0" width="2.5" height="19.6" fill="#43ab79"/>
<rect x="586.04" y="238.4" width="2.5" height="4.2" fill="#e93d52"/>
<rect x="589.16" y="242.6" width="2.5" height="11.0" fill="#e93d52"/>
<rect x="592.29" y="250.8" width="2.5" height="2.8" fill="#43ab79"/>
<rect x="595.41" y="250.8" width="2.5" height="11.0" fill="#e93d52"/>
<rect x="598.53" y="261.8" width="2.5" height="10.3" fill="#e93d52"/>
<rect x="601.65" y="264.0" width="2.5" height="8.1" fill="#43ab79"/>
<rect x="604.78" y="259.0" width="2.5" height="5.0" fill="#43ab79"/>
<rect x="607.90" y="241.3" width="2.5" height="17.7" fill="#43ab79"/>
<rect x="611.02" y="241.0" width="2.5" height="1.2" fill="#e93d52"/>
<rect x="614.15" y="236.7" width="2.5" height="5.9" fill="#43ab79"/>
<rect x="617.27" y="234.0" width="2.5" height="18.5" fill="#e93d52"/>
<rect x="620.39" y="252.0" width="2.5" height="23.0" fill="#e93d52"/>
<rect x="623.52" y="274.4" width="2.5" height="3.3" fill="#e93d52"/>
<rect x="626.64" y="277.7" width="2.5" height="7.5" fill="#e93d52"/>
<rect x="629.76" y="285.2" width="2.5" height="10.3" fill="#e93d52"/>
<rect x="632.88" y="292.0" width="2.5" height="3.0" fill="#43ab79"/>
<rect x="636.01" y="292.0" width="2.5" height="10.0" fill="#e93d52"/>
<rect x="639.13" y="302.0" width="2.5" height="1.6" fill="#e93d52"/>
<rect x="642.25" y="296.0" width="2.5" height="7.6" fill="#43ab79"/>
<rect x="645.38" y="284.0" width="2.5" height="12.0" fill="#43ab79"/>
<rect x="648.50" y="275.7" width="2.5" height="8.3" fill="#43ab79"/>
<rect x="651.62" y="273.0" width="2.5" height="2.7" fill="#43ab79"/>
<rect x="654.75" y="273.0" width="2.5" height="2.2" fill="#e93d52"/>
<rect x="657.87" y="275.2" width="2.5" height="6.1" fill="#e93d52"/>
<rect x="660.99" y="281.3" width="2.5" height="15.7" fill="#e93d52"/>
<rect x="664.12" y="298.2" width="2.5" height="1.6" fill="#e93d52"/>
<rect x="667.24" y="297.4" width="2.5" height="2.4" fill="#43ab79"/>
<rect x="670.36" y="297.4" width="2.5" height="9.0" fill="#e93d52"/>
<rect x="673.48" y="302.3" width="2.5" height="4.1" fill="#43ab79"/>
<rect x="676.61" y="298.7" width="2.5" height="3.6" fill="#43ab79"/>
<rect x="679.73" y="273.0" width="2.5" height="24.0" fill="#43ab79"/>
<rect x="682.85" y="272.0" width="2.5" height="1.2" fill="#43ab79"/>
<rect x="685.98" y="272.0" width="2.5" height="1.6" fill="#e93d52"/>
<rect x="689.10" y="262.6" width="2.5" height="11.0" fill="#43ab79"/>
<rect x="692.22" y="262.6" width="2.5" height="18.1" fill="#e93d52"/>
<rect x="695.35" y="279.3" width="2.5" height="2.5" fill="#43ab79"/>
<rect x="698.47" y="266.6" width="2.5" height="12.7" fill="#43ab79"/>
<rect x="701.59" y="251.5" width="2.5" height="15.1" fill="#43ab79"/>
<rect x="704.71" y="250.7" width="2.5" height="1.2" fill="#43ab79"/>
<rect x="707.84" y="250.7" width="2.5" height="4.9" fill="#e93d52"/>
<rect x="710.96" y="246.0" width="2.5" height="6.8" fill="#43ab79"/>
<rect x="714.08" y="243.0" width="2.5" height="3.0" fill="#43ab79"/>
<rect x="717.21" y="243.0" width="2.5" height="15.2" fill="#e93d52"/>
<rect x="720.33" y="255.0" width="2.5" height="3.7" fill="#43ab79"/>
<rect x="723.45" y="254.4" width="2.5" height="17.7" fill="#e93d52"/>
<rect x="726.58" y="268.9" width="2.5" height="3.2" fill="#43ab79"/>
<rect x="729.70" y="268.9" width="2.5" height="1.2" fill="#e93d52"/>
<rect x="732.82" y="265.2" width="2.5" height="4.5" fill="#43ab79"/>
<rect x="735.94" y="232.8" width="2.5" height="32.4" fill="#43ab79"/>
<rect x="739.07" y="222.1" width="2.5" height="10.7" fill="#43ab79"/>
<rect x="742.19" y="209.0" width="2.5" height="13.1" fill="#43ab79"/>
<rect x="745.31" y="209.0" width="2.5" height="25.1" fill="#e93d52"/>
<rect x="748.44" y="234.1" width="2.5" height="5.2" fill="#e93d52"/>
<rect x="751.56" y="223.3" width="2.5" height="16.0" fill="#43ab79"/>
<rect x="754.68" y="223.3" width="2.5" height="18.5" fill="#e93d52"/>
<rect x="757.81" y="241.8" width="2.5" height="20.5" fill="#e93d52"/>
<rect x="760.93" y="261.0" width="2.5" height="1.6" fill="#43ab79"/>
<rect x="764.05" y="255.7" width="2.5" height="5.8" fill="#43ab79"/>
<rect x="767.17" y="248.9" width="2.5" height="6.8" fill="#43ab79"/>
<rect x="770.30" y="250.5" width="2.5" height="1.6" fill="#e93d52"/>
<rect x="773.42" y="243.1" width="2.5" height="9.0" fill="#43ab79"/>
<rect x="776.54" y="243.1" width="2.5" height="5.8" fill="#e93d52"/>
<rect x="779.67" y="248.9" width="2.5" height="19.6" fill="#e93d52"/>
<rect x="782.79" y="266.0" width="2.5" height="1.4" fill="#43ab79"/>
<rect x="785.91" y="266.4" width="2.5" height="5.4" fill="#e93d52"/>
<rect x="789.04" y="267.4" width="2.5" height="4.4" fill="#43ab79"/>
<rect x="792.16" y="267.4" width="2.5" height="16.4" fill="#e93d52"/>
<rect x="795.28" y="283.3" width="2.5" height="12.3" fill="#e93d52"/>
<rect x="798.40" y="294.3" width="2.5" height="3.7" fill="#e93d52"/>
<rect x="801.53" y="298.0" width="2.5" height="1.2" fill="#e93d52"/>
<line x1="179" y1="298.5" x2="820.5" y2="298.5" stroke="#f5b1bc" stroke-width="1.1"/>
<line x1="820.3" y1="119" x2="820.3" y2="370.5" stroke="#888" stroke-width="1"/>
<line x1="179" y1="369.8" x2="820.5" y2="369.8" stroke="#b3b3b3" stroke-width="1.4"/>
<line x1="820.5" y1="137.8" x2="823" y2="137.8" stroke="#777" stroke-width="0.8"/>
<text x="824.6" y="140.6" font-size="5.5" fill="#555" font-family="Liberation Sans">1.14000</text>
<line x1="820.5" y1="158.7" x2="823" y2="158.7" stroke="#777" stroke-width="0.8"/>
<text x="824.6" y="161.5" font-size="5.5" fill="#555" font-family="Liberation Sans">1.13500</text>
<line x1="820.5" y1="179.6" x2="823" y2="179.6" stroke="#777" stroke-width="0.8"/>
<text x="824.6" y="182.4" font-size="5.5" fill="#555" font-family="Liberation Sans">1.13000</text>
<line x1="820.5" y1="200.5" x2="823" y2="200.5" stroke="#777" stroke-width="0.8"/>
<text x="824.6" y="203.3" font-size="5.5" fill="#555" font-family="Liberation Sans">1.12500</text>
<line x1="820.5" y1="221.4" x2="823" y2="221.4" stroke="#777" stroke-width="0.8"/>
<text x="824.6" y="224.2" font-size="5.5" fill="#555" font-family="Liberation Sans">1.12000</text>
<line x1="820.5" y1="242.3" x2="823" y2="242.3" stroke="#777" stroke-width="0.8"/>
<text x="824.6" y="245.1" font-size="5.5" fill="#555" font-family="Liberation Sans">1.11500</text>
<line x1="820.5" y1="263.2" x2="823" y2="263.2" stroke="#777" stroke-width="0.8"/>
<text x="824.6" y="266.0" font-size="5.5" fill="#555" font-family="Liberation Sans">1.11000</text>
<line x1="820.5" y1="284.1" x2="823" y2="284.1" stroke="#777" stroke-width="0.8"/>
<text x="824.6" y="286.9" font-size="5.5" fill="#555" font-family="Liberation Sans">1.10500</text>
<line x1="820.5" y1="305.0" x2="823" y2="305.0" stroke="#777" stroke-width="0.8"/>
<text x="824.6" y="307.8" font-size="5.5" fill="#555" font-family="Liberation Sans">1.10000</text>
<line x1="820.5" y1="325.9" x2="823" y2="325.9" stroke="#777" stroke-width="0.8"/>
<text x="824.6" y="328.7" font-size="5.5" fill="#555" font-family="Liberation Sans">1.09500</text>
<line x1="820.5" y1="346.8" x2="823" y2="346.8" stroke="#777" stroke-width="0.8"/>
<text x="824.6" y="349.6" font-size="5.5" fill="#555" font-family="Liberation Sans">1.09000</text>
<g clip-path="url(#cb)">
<line x1="820.5" y1="367.7" x2="823" y2="367.7" stroke="#777" stroke-width="0.8"/>
<text x="824.6" y="370.5" font-size="5.5" fill="#555" font-family="Liberation Sans">1.08500</text>
</g>
<rect x="820.5" y="294.6" width="26.5" height="8.3" fill="#e8394f"/>
<text x="824.8" y="300.7" font-size="5.6" fill="#fff" font-family="Liberation Sans" font-weight="bold">1.10162</text>
<line x1="203.6" y1="370.5" x2="203.6" y2="372" stroke="#999" stroke-width="0.8"/>
<text x="203.6" y="377.8" font-size="6.1" letter-spacing="-0.3" fill="#555" text-anchor="middle" font-family="Liberation Sans">Май</text>
<line x1="275.4" y1="370.5" x2="275.4" y2="372" stroke="#999" stroke-width="0.8"/>
<text x="275.4" y="377.8" font-size="6.1" letter-spacing="-0.3" fill="#555" text-anchor="middle" font-family="Liberation Sans">Июн</text>
<line x1="338.4" y1="370.5" x2="338.4" y2="372" stroke="#999" stroke-width="0.8"/>
<text x="338.4" y="377.8" font-size="6.1" letter-spacing="-0.3" fill="#555" text-anchor="middle" font-family="Liberation Sans">Июл</text>
<line x1="409.7" y1="370.5" x2="409.7" y2="372" stroke="#999" stroke-width="0.8"/>
<text x="409.7" y="377.8" font-size="6.1" letter-spacing="-0.3" fill="#555" text-anchor="middle" font-family="Liberation Sans">Авг</text>
<line x1="478.3" y1="370.5" x2="478.3" y2="372" stroke="#999" stroke-width="0.8"/>
<text x="478.3" y="377.8" font-size="6.1" letter-spacing="-0.3" fill="#555" text-anchor="middle" font-family="Liberation Sans">Сен</text>
<line x1="544.3" y1="370.5" x2="544.3" y2="372" stroke="#999" stroke-width="0.8"/>
<text x="544.3" y="377.8" font-size="6.1" letter-spacing="-0.3" fill="#555" text-anchor="middle" font-family="Liberation Sans">Окт</text>
<line x1="615.9" y1="370.5" x2="615.9" y2="372" stroke="#999" stroke-width="0.8"/>
<text x="615.9" y="377.8" font-size="6.1" letter-spacing="-0.3" fill="#555" text-anchor="middle" font-family="Liberation Sans">Ноя</text>
<line x1="681.9" y1="370.5" x2="681.9" y2="372" stroke="#999" stroke-width="0.8"/>
<text x="681.9" y="377.8" font-size="6.1" letter-spacing="-0.3" fill="#555" text-anchor="middle" font-family="Liberation Sans">Дек</text>
<line x1="747.3" y1="370.5" x2="747.3" y2="372" stroke="#999" stroke-width="0.8"/>
<text x="747.3" y="377.8" font-size="6.1" letter-spacing="-0.3" fill="#555" text-anchor="middle" font-family="Liberation Sans" font-weight="bold">2020</text>
<line x1="815.0" y1="370.5" x2="815.0" y2="372" stroke="#999" stroke-width="0.8"/>
<text x="820.3" y="377.8" font-size="6.1" letter-spacing="-0.3" fill="#555" text-anchor="end" font-family="Liberation Sans">Фев</text>
</svg>
<!-- left toolbar icons -->
<svg class="a" style="left:149px;top:97px" width="27" height="286" viewBox="149 97 27 286" fill="none" stroke="#5a5a5a" stroke-width="0.8">
<g stroke="#5aaaf0" stroke-width="0.85"><path d="M162.5 103.5 V107.5 M162.5 111.5 V115.5 M156.5 109.5 H160.5 M164.5 109.5 H168.5"/></g>
<path d="M158 132.5 L166.5 124"/><circle cx="157.3" cy="133.2" r="1.1" /><circle cx="167.2" cy="123.3" r="1.1"/>
<path d="M157.5 145.5 L162.5 141 M160.5 148.5 L165.5 144 M163.5 151 L168 147 M157.5 145.5 L163 151 M156.5 144.5 H159.5 M156.5 150.5 H159.5 M157 152 L160 150"/><circle cx="163.6" cy="151.6" r="1"/>
<path d="M157 170 L160.5 164.5 L164 163.5 L163.5 166.5 Z M163.5 163.8 L167.8 160.6 M162.5 162 L164 164"/>
<path d="M158.3 180.5 V179.3 H166.7 V180.5 M162.5 179.3 V189 M161 189 H164"/>
<path d="M158 206.8 L159 199.3 L167.3 205.8 L166 199.3 L158 206.8"/><circle cx="157.8" cy="207.4" r="1.1"/><circle cx="167.6" cy="206.2" r="1.1"/><circle cx="159" cy="198.6" r="1.1"/><circle cx="166" cy="198.6" r="1.1"/>
<path d="M158.4 217.6 H168 M158.4 223.2 H166.5 M158.4 226.6 H168 M162.5 218.5 V226.6"/><circle cx="157.3" cy="217.6" r="1.1"/><circle cx="157.3" cy="223.2" r="1.1"/><circle cx="157.3" cy="226.6" r="1.1"/><circle cx="167.6" cy="223.2" r="1.1"/>
<path d="M158.8 241 H166.5 M161.8 238 L158.8 241 L161.8 244" stroke="#3a3a3a" stroke-width="1.6"/>
<path d="M150 254 H175" stroke="#eceef0"/>
<path d="M156.8 269.6 L165.6 260.8 L167.8 263 L159 271.8 Z M159.2 267.2 L160.4 268.4 M161 265.4 L162.6 267 M162.8 263.6 L164 264.8 M164.6 261.8 L165.8 263"/>
<circle cx="161.3" cy="283.4" r="3.8"/><path d="M164 286.1 L166.6 288.7 M161.3 281.6 V285.2 M159.5 283.4 H163.1"/>
<path d="M150 297.5 H175" stroke="#eceef0"/>
<path d="M158.4 315 V309.6 A4.1 4.1 0 0 1 166.6 309.6 V315 H164.6 V309.6 A2.1 2.1 0 0 0 160.4 309.6 V315 Z M158.4 313 H160.4 M164.6 313 H166.6"/>
<path d="M157 331 L163.5 324.5 L165.5 326.5 L159 333 L156.5 333.5 Z"/><rect x="164" y="330" width="4" height="3.5"/><path d="M164.8 330 V328.8 A1.2 1.2 0 0 1 167.2 328.8 V330"/>
<rect x="157.5" y="347" width="9" height="6.5"/><path d="M159.5 347 V344 A2.5 2.5 0 0 1 164.5 344"/><circle cx="162" cy="350.5" r="0.6" fill="#666"/>
<path d="M156 367 Q162 360.5 168 367 Q162 373 156 367 Z"/><circle cx="162" cy="366.8" r="1.6" fill="#4c4c4c"/>
</svg>
<div class="a" style="left:149px;top:371px;width:27px;height:11.5px;background:#60636e"></div>
<svg class="a" style="left:156px;top:373px" width="13" height="8" viewBox="0 0 13 8"><path d="M1.5 1.5 L6.5 6 L11.5 1.5" fill="none" stroke="#fff" stroke-width="1.2"/></svg>
<svg class="a" style="left:175px;top:336.5px" width="5" height="13" viewBox="0 0 5 13"><rect x="0.5" y="0.5" width="4" height="12" rx="1.5" fill="#fff" stroke="#d8dce0" stroke-width="0.7"/><path d="M3 5 L1.8 6.5 L3 8" fill="none" stroke="#aaa" stroke-width="0.6"/></svg>

<!-- top toolbar -->
<div class="a" style="left:199px;top:97px;width:1px;height:20px;background:#eef0f2"></div>
<div class="a" style="left:219px;top:97px;width:1px;height:20px;background:#eef0f2"></div>
<div class="a" style="left:276px;top:97px;width:1px;height:20px;background:#eef0f2"></div>
<div class="a" style="left:343px;top:97px;width:1px;height:20px;background:#eef0f2"></div>
<div class="t" style="left:186.5px;top:103px;font-size:8.5px;color:#4c4c4c;font-style:italic">Д</div>
<svg class="a" style="left:204px;top:101px" width="11" height="12" viewBox="0 0 11 12" fill="none" stroke="#5a5a5a" stroke-width="0.85"><path d="M3.3 0.5 V11.5 M7.8 1.8 V10"/><rect x="2.2" y="2" width="2.2" height="7.5" fill="#fff"/><rect x="6.7" y="3.5" width="2.2" height="4.5" fill="#fff"/></svg>
<svg class="a" style="left:223.5px;top:101.8px" width="13" height="10" viewBox="0 0 13 10" fill="none" stroke="#5a5a5a" stroke-width="0.8"><path d="M6.5 0.3 V5.3 M1.8 7 L6.5 5.5 L11.2 7"/><circle cx="1.9" cy="8" r="1.45"/><circle cx="6.5" cy="6.2" r="1.2"/><circle cx="11.1" cy="8" r="1.45"/></svg>
<div class="t" style="left:240px;top:103.5px;font-size:6.98px;color:#4c4c4c">Сравнить</div>
<svg class="a" style="left:282.5px;top:104.5px" width="11" height="6" viewBox="0 0 12 7"><path d="M0.5 5 L3.5 2 L6.5 4.5 L11 1" fill="none" stroke="#4c4c4c" stroke-width="0.9"/></svg>
<div class="t" style="left:297px;top:103.5px;font-size:7.21px;color:#4c4c4c">Индикаторы</div>

<!-- legend -->
<svg class="a" style="left:182px;top:126px" width="7.4" height="7.4" viewBox="0 0 9 9"><rect x="0.6" y="0.6" width="7.8" height="7.8" rx="1.2" fill="#fff" stroke="#8a8a8a" stroke-width="1.1"/><path d="M2.4 4.5 H6.6" stroke="#777" stroke-width="1.1"/></svg>
<div class="t" style="left:192.5px;top:126.1px;font-size:8.47px;color:#3a3a3a;-webkit-text-stroke:0.12px #3a3a3a">Euro vs US Dollar, 1Д</div>
<div class="t" style="left:277.2px;top:127.6px;font-size:4.2px;color:#999">▼</div>
<svg class="a" style="left:286px;top:126.6px" width="16" height="7.2" viewBox="0 0 16 7.2"><rect x="0.2" y="0" width="7.1" height="7.1" rx="0.8" fill="#d6d6d6"/><circle cx="3.75" cy="3.55" r="2.3" fill="none" stroke="#fff" stroke-width="0.9"/><circle cx="3.75" cy="3.55" r="0.8" fill="#bbb"/><rect x="9" y="0" width="7.1" height="7.1" rx="0.8" fill="#d6d6d6"/><path d="M10.2 3.55 Q12.55 0.8 14.9 3.55 Q12.55 6.3 10.2 3.55 Z" fill="#fff"/><circle cx="12.55" cy="3.55" r="0.8" fill="#bbb"/></svg>
<div class="t" style="left:306px;top:127.2px;font-size:7.05px;color:#555">ОТКР</div>
<div class="t" style="left:326.5px;top:127.2px;font-size:7.33px;color:#e23d4d">1.10175</div>
<div class="t" style="left:358.5px;top:127.2px;font-size:7.05px;color:#555">МАКС</div>
<div class="t" style="left:379px;top:127.2px;font-size:7.33px;color:#e23d4d">1.10247</div>
<div class="t" style="left:410.5px;top:127.2px;font-size:7.05px;color:#555">МИН</div>
<div class="t" style="left:428px;top:127.2px;font-size:7.33px;color:#e23d4d">1.10122</div>
<div class="t" style="left:459.5px;top:127.2px;font-size:7.05px;color:#555">ЗАКР</div>
<div class="t" style="left:478.5px;top:127.2px;font-size:7.33px;color:#e23d4d">1.10162</div>

<!-- right panel -->
<div class="a" id="grn"></div>
<div class="t" style="left:871.8px;top:103.5px;font-size:6.2px;color:#fff;font-weight:bold">EURUSD</div>
<div class="t" style="left:872px;top:112.9px;font-size:5px;color:#fff;font-weight:bold">11:26:16</div>
<div class="t" style="right:12.2px;top:102.9px;font-size:6.6px;letter-spacing:-0.24px;color:#fff;font-weight:bold">-0.016%</div>
<div class="t" style="right:12.2px;top:112.9px;font-size:5.03px;color:#fff;font-weight:bold">1.10182</div>
<svg class="a" style="left:876px;top:133px" width="26" height="14" viewBox="0 0 26 14"><path d="M1.3 5.8 L9 11.6 L24 1.5" fill="none" stroke="#fff" stroke-width="1.25"/></svg>
<div class="a" id="sb"></div>
<div class="a" style="left:929.5px;top:160px;width:1px;height:32px;background:#f4f4f4"></div>
<div class="t" style="left:872px;top:167.7px;font-size:7.61px;color:#555">1.10162</div>
<div class="t" style="left:872px;top:178.3px;font-size:7.5px;color:#bbb">Sell</div>
<div class="t" style="right:12px;top:167.7px;font-size:7.61px;color:#555">1.10192</div>
<div class="t" style="right:12px;top:178.3px;font-size:7.5px;color:#bbb">Buy</div>

<div class="a" id="pos"></div>
<div class="a" style="left:867px;top:209px;width:126px;height:21px;background:#f6f6f6;border-bottom:1px solid #e6e6e6"></div>
<div class="t" style="left:866px;width:128px;text-align:center;top:214.6px;font-size:7.8px;color:#555">Позиции трейдеров</div>
<svg class="a" style="left:890px;top:231px" width="80" height="150" viewBox="890 231 80 150">
<circle cx="930" cy="271" r="31.5" fill="#fff" stroke="#dfe1e3" stroke-width="3"/>
<circle cx="930" cy="271" r="29.3" fill="none" stroke="#f15b5b" stroke-width="1.3"/>
<path d="M930 246.8 A24.2 24.2 0 0 1 937.5 294" fill="none" stroke="#f44f4f" stroke-width="5.5"/>
<text x="930" y="269.5" font-size="10.3" fill="#f26464" text-anchor="middle" font-family="Liberation Sans">Sell</text>
<text x="930" y="286" font-size="11.8" fill="#ef4c4c" text-anchor="middle" font-weight="bold" font-family="Liberation Sans">45</text>
<text x="941" y="281.8" font-size="6.3" fill="#f26464" font-family="Liberation Sans">%</text>
<circle cx="930" cy="344" r="31.5" fill="#fff" stroke="#dfe1e3" stroke-width="3"/>
<circle cx="930" cy="344" r="29.3" fill="none" stroke="#6cc644" stroke-width="1.3"/>
<path d="M930 319.8 A24.2 24.2 0 1 1 922.5 367" fill="none" stroke="#6cc644" stroke-width="5.5"/>
<text x="930" y="342.5" font-size="10.3" fill="#7fcf5e" text-anchor="middle" font-family="Liberation Sans">Buy</text>
<text x="930" y="359" font-size="11.8" fill="#6cc644" text-anchor="middle" font-weight="bold" font-family="Liberation Sans">55</text>
<text x="941" y="354.8" font-size="6.3" fill="#7fcf5e" font-family="Liberation Sans">%</text>
</svg>

<!-- tabs -->
<div class="tab" style="left:230.5px;width:81.5px"><span>Закрытые сделки (0)</span></div>
<div class="tab" style="left:312px;width:71.5px"><span>История счета (0)</span></div>
<div class="tab" style="left:383.5px;width:50px"><span>Журнал (3)</span></div>
<div class="tab" style="left:149.6px;top:446.5px;height:20.5px;width:80.9px;background:#fff;border-color:#e2e2e2"><span style="top:5.6px">Открытые сделки (0)</span></div>

<div class="a" id="foot"></div>
<div class="t" style="left:148px;top:475.6px;font-size:5.48px;color:#fff;font-weight:bold">InstaForex™ is a registered trademark of InstaForex Group © 2007-2020</div>
<div class="t" style="right:22px;top:475.7px;font-size:5.73px;color:#fff;font-weight:bold">Баланс: <span style="font-weight:normal">0.00</span> Средства: <span style="font-weight:normal">0.00</span> Залог: <span style="font-weight:normal">0.00</span> Свободно: <span style="font-weight:normal">0.00</span> Уровень: <span style="font-weight:normal">0.00%</span> Прибыль:</div>
<div class="t" style="left:980.5px;top:475.2px;font-size:6.8px;color:#fff">0.00</div>
</body></html>
